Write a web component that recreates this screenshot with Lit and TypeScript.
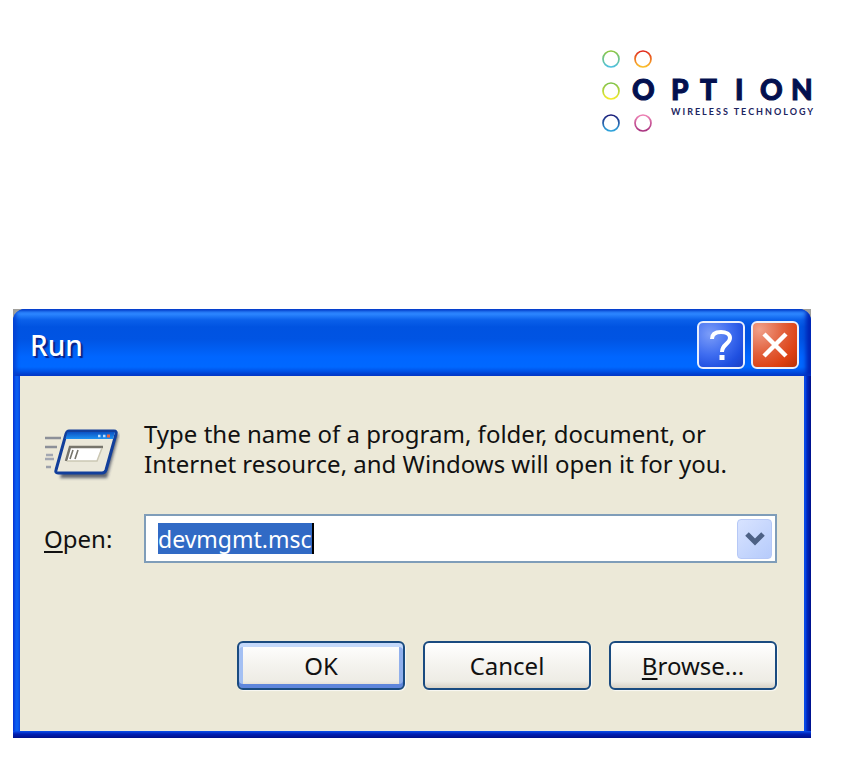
import { LitElement, html, css } from "lit";
import { customElement, state } from "lit/decorators.js";

@customElement("option-logo")
class OptionLogo extends LitElement {
  static styles = css`
    :host { display: block; width: 214px; }
    .logo { display: block; width: 214px; height: 86px; }
    .word { font: 900 28px Lato, sans-serif; fill: #03104f; stroke: #03104f; stroke-width: 1px; }
    .tag { font: 700 9px Lato, sans-serif; fill: #1c2560; letter-spacing: 2px; }
  `;

  render() {
    return html`
      <svg class="logo" viewBox="0 0 214 86" role="img" aria-label="Option wireless technology">
        <defs>
          <linearGradient id="a" x1="0" y1="0" x2="0" y2="1"><stop offset="0" stop-color="#8cc63f" /><stop offset="1" stop-color="#4cc0e0" /></linearGradient>
          <linearGradient id="b" x1="0" y1="0" x2="0" y2="1"><stop offset="0" stop-color="#e0271c" /><stop offset="1" stop-color="#fbc02a" /></linearGradient>
          <linearGradient id="c" x1="0" y1="0" x2="0" y2="1"><stop offset="0" stop-color="#7fc24a" /><stop offset="1" stop-color="#f3ea2a" /></linearGradient>
          <linearGradient id="d" x1="0" y1="0" x2="0" y2="1"><stop offset="0" stop-color="#1b1b78" /><stop offset="1" stop-color="#2fa5dc" /></linearGradient>
          <linearGradient id="e" x1="0" y1="0" x2="0" y2="1"><stop offset="0" stop-color="#ee82b4" /><stop offset="1" stop-color="#a8327f" /></linearGradient>
        </defs>
        <g fill="none" stroke-width="1.7">
          <circle cx="10" cy="12" r="8" stroke="url(#a)" />
          <circle cx="42" cy="12" r="8" stroke="url(#b)" />
          <circle cx="10" cy="44" r="8" stroke="url(#c)" />
          <circle cx="10" cy="76" r="8" stroke="url(#d)" />
          <circle cx="42" cy="76" r="8" stroke="url(#e)" />
        </g>
        <text class="word" y="53" x="31 70 99 134 159 190">OPTION</text>
        <text class="tag" x="70" y="68">WIRELESS TECHNOLOGY</text>
      </svg>
    `;
  }
}

@customElement("run-dialog")
class RunDialog extends LitElement {
  @state() private command = "devmgmt.msc";

  static styles = css`
    :host { display: block; font: 24px/30px "Noto Sans", Tahoma, sans-serif; color: #111; }
    * { box-sizing: border-box; }
    button, input { font: inherit; color: inherit; margin: 0; padding: 0; }
    .corners { background: #a09f9b; }
    .window {
      border-radius: 12px 12px 0 0;
      background: linear-gradient(90deg, #0431d4 0, #0a5cf0 3px, #0a5cf0 5px, #0542dc 7px, #0542dc calc(100% - 7px), #0a50ee calc(100% - 6px), #0028c0 calc(100% - 4px), #00108a 100%);
      overflow: hidden;
    }
    .bar {
      display: flex; align-items: center; gap: 6px;
      height: 67px; padding: 5px 12px 0 17px;
      background: linear-gradient(180deg, #0650d8 0, #2a83fb 3px, #2c86ff 5px, #0a60ea 11px, #0053e1 18px, #0054e3 30px, #0066ff 48px, #0068ff 58px, #0053e8 62px, #0040cc 67px);
      box-shadow: inset 3px 0 4px #0640d0, inset -5px 0 4px #0024b4;
    }
    .title { flex: 1; margin: 0; font-size: 28px; font-weight: 500; color: #fff; text-shadow: 2px 2px 1px #0a1f83; }
    .cap {
      width: 48px; height: 48px; border: 2px solid #e9effd; border-radius: 6px;
      display: grid; place-items: center;
    }
    .help { background: radial-gradient(circle at 25% 25%, #7c9df8 0, #3f6df0 45%, #1f4fe0 75%, #1a3fc4 100%); }
    .close { background: radial-gradient(circle at 15% 15%, #f0a08a 0, #e2603c 45%, #dc4012 75%, #b83208 100%); }
    .body {
      margin: 0 7px; padding: 43px 27px 41px 24px;
      background: #ece9d8;
      display: grid; grid-template-columns: 76px 1fr; column-gap: 24px;
    }
    .edge { height: 7px; background: linear-gradient(180deg, #0a50ee, #0020b4 3px, #00108a); }
    .hint { margin: 0; }
    .icon { display: block; margin-top: 8px; }
    .label { align-self: center; margin-top: 31px; }
    .combo {
      margin-top: 31px; height: 49px; border: 2px solid #7f9db9; background: #fff;
      display: flex; align-items: center; justify-content: space-between; padding: 0 3px 0 12px;
    }
    .field {
      field-sizing: content; height: 31px; border: 0; border-right: 2px solid #000; outline: 0;
      background: #316ac5; color: #fff; font-size: 23px;
    }
    .drop {
      width: 35px; height: 40px; border: 1px solid #b6c8f6; border-radius: 4px;
      background: linear-gradient(135deg, #d8e3ff, #b6cbfb);
      display: grid; place-items: center;
    }
    .actions { grid-column: 1 / -1; margin-top: 78px; display: flex; justify-content: flex-end; gap: 18px; }
    .btn {
      width: 168px; height: 49px; border: 2px solid #1a4b80; border-radius: 6px;
      background: linear-gradient(180deg, #fff 0, #f4f3ee 50%, #eeece5 85%, #d8d2c6 100%);
      box-shadow: 1px 1px 1px #faf9f4;
    }
    .primary { box-shadow: inset 0 4px 0 #c4d9fb, inset 0 -4px 0 #5f86dc, inset 4px 0 0 #a4c0f3, inset -4px 0 0 #91b0ec, 1px 1px 1px #faf9f4; }
    u { text-decoration-thickness: 2px; text-underline-offset: 3px; }
  `;

  render() {
    return html`
      <div class="corners">
        <section class="window" role="dialog" aria-labelledby="title">
          <header class="bar">
            <h1 class="title" id="title">Run</h1>
            <button class="cap help" aria-label="Help">
              <svg width="26" height="34" viewBox="0 0 26 34" fill="none" stroke="#fff" stroke-width="4">
                <path d="M4 11C4 6 8 4 13 4C18 4 22 6 22 10C22 16 14 16 14 24" stroke-linejoin="round" /><path d="M14 27v5" stroke-width="5" />
              </svg>
            </button>
            <button class="cap close" aria-label="Close">
              <svg width="28" height="28" viewBox="0 0 28 28" stroke="#fff" stroke-width="4.5"><path d="M3 3L25 25M25 3L3 25" /></svg>
            </button>
          </header>
          <div class="body">
            <svg class="icon" width="76" height="56" viewBox="0 0 76 56" aria-hidden="true">
              <defs>
                <filter id="soft" x="-20%" y="-20%" width="150%" height="150%"><feGaussianBlur stdDeviation="1.6" /></filter>
                <linearGradient id="cap" x1="0" y1="0" x2="0" y2="1"><stop offset="0" stop-color="#0b52c4" /><stop offset="1" stop-color="#1f93f2" /></linearGradient>
              </defs>
              <path d="M28 7H75L63 51H16Z" fill="#333a50" opacity=".75" filter="url(#soft)" />
              <g stroke-width="2.4"><path d="M1 11H17" stroke="#8c9098" /><path d="M1 20H13" stroke="#8c9098" /><path d="M2 28H9M1 32H10" stroke="#a3a8b2" /><path d="M2 40H7" stroke="#9ba0aa" /></g>
              <path d="M25 4H70Q73 4 72 7L62 43Q61 46 58 46H14Q11 46 12 43L22 7Q23 4 25 4Z" fill="#ebe8da" stroke="#123f9b" stroke-width="3" stroke-linejoin="round" />
              <path d="M23.500 5H71L69 12H21.500Z" fill="url(#cap)" />
              <path d="M54 9h2.500M59 9h2.500" stroke="#b9dcff" stroke-width="2.500" /><path d="M63 9h3" stroke="#f0643c" stroke-width="3" />
              <path d="M26 19H58L53 34H22Z" fill="#fff" />
              <path d="M22 34L26 20H59" fill="none" stroke="#77756c" stroke-width="2.500" />
              <path d="M23 34H53L58 21" fill="none" stroke="#cbc7b4" stroke-width="1.500" />
              <path d="M26 32L29 23M31 32L34 23" stroke="#77756c" stroke-width="1.6" />
            </svg>
            <p class="hint">Type the name of a program, folder, document, or<br />Internet resource, and Windows will open it for you.</p>
            <label class="label" for="command"><u>O</u>pen:</label>
            <div class="combo">
              <input class="field" id="command" .value=${this.command} spellcheck="false"
                @input=${(e: Event) => (this.command = (e.target as HTMLInputElement).value)} />
              <button class="drop" aria-label="Show recent commands">
                <svg width="22" height="16" viewBox="0 0 22 16" fill="none" stroke="#4d6185" stroke-width="5"><path d="M3 3L11 11L19 3" /></svg>
              </button>
            </div>
            <div class="actions">
              <button class="btn primary">OK</button>
              <button class="btn">Cancel</button>
              <button class="btn"><u>B</u>rowse...</button>
            </div>
          </div>
          <div class="edge"></div>
        </section>
      </div>
    `;
  }
}

@customElement("app-root")
class AppRoot extends LitElement {
  static styles = css`
    :host { display: block; min-height: 100vh; background: #fff; }
    .head { display: flex; justify-content: flex-end; padding: 47px 48px 176px 0; }
    .main { padding: 0 52px 19px 13px; }
  `;

  render() {
    return html`
      <header class="head"><option-logo></option-logo></header>
      <main class="main"><run-dialog></run-dialog></main>
    `;
  }
}
